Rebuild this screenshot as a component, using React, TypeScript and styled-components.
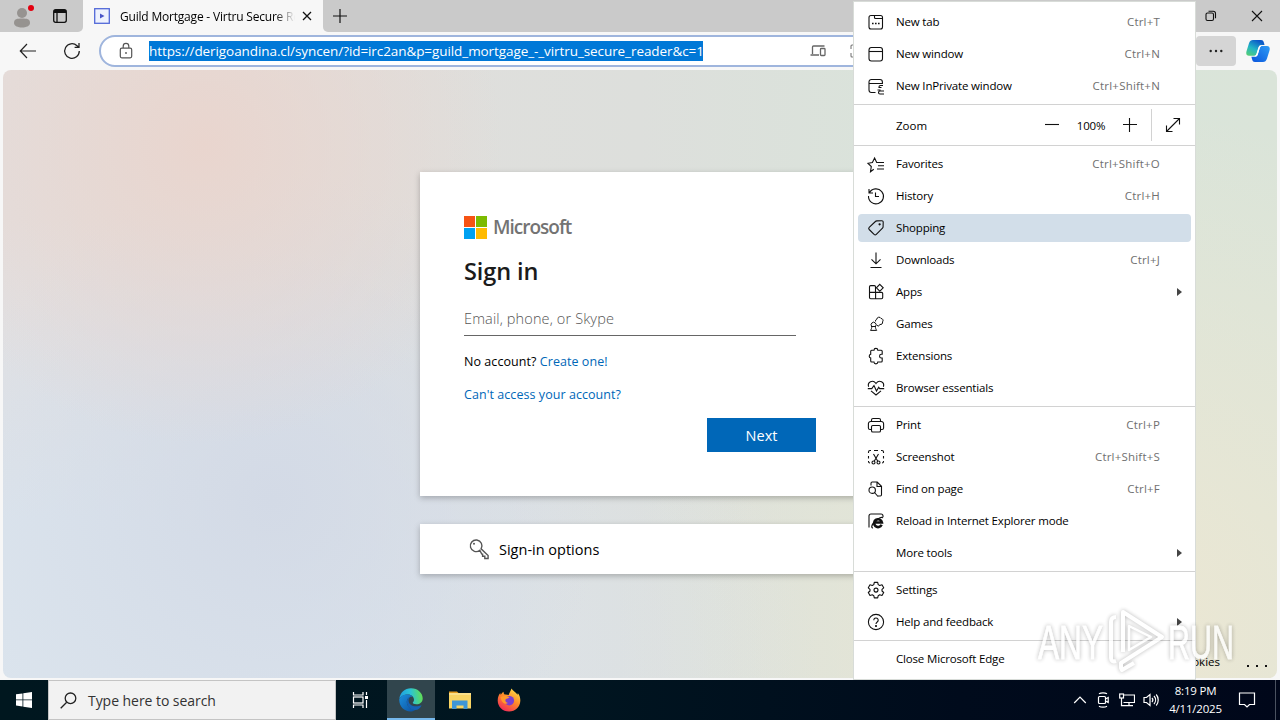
import { Fragment, ReactNode } from "react";
import styled, { createGlobalStyle } from "styled-components";

type IconName =
  | "newTab"
  | "window"
  | "inPrivate"
  | "star"
  | "history"
  | "tag"
  | "download"
  | "apps"
  | "games"
  | "puzzle"
  | "heart"
  | "print"
  | "screenshot"
  | "find"
  | "ie"
  | "settings"
  | "help";

interface MenuEntry {
  icon?: IconName;
  label: string;
  shortcut?: string;
  hasSubmenu?: boolean;
  active?: boolean;
}

const icons: Record<IconName, ReactNode> = {
  newTab: (
    <>
      <rect x="3" y="3.5" width="13.5" height="13.5" rx="2" />
      <path d="M8.500 3.500v2a1 1 0 0 0 1 1h7" />
      <path d="M6 11.500h1.600M9 11.500h1.600M12 11.500h1.600" strokeWidth="1.600" />
    </>
  ),
  window: (
    <>
      <rect x="3" y="3.5" width="13.5" height="13.5" rx="2.4" />
      <path d="M3 7.500h13.500" />
    </>
  ),
  inPrivate: (
    <>
      <path d="M9.500 16.500H5.400A2.400 2.400 0 0 1 3 14.100V5.900A2.400 2.400 0 0 1 5.400 3.500H14a2.400 2.400 0 0 1 2.400 2.400V8M3 7.500h13.400" />
      <path d="M17 9.500h-2.500a1.500 1.500 0 0 0-1.500 1.500v.5h2.500M11.500 14h3M18 15h-4a1.500 1.500 0 0 0 0 3h4" />
    </>
  ),
  star: (
    <path d="M7.800 15.300l-3.300 2.400.8-5.200-3.300-3.200 4.400-.7L8.600 4l2.100 4.500H18M12 11.800h6M11 15h7" />
  ),
  history: <path d="M3.400 6.800A7.500 7.500 0 1 1 2.500 10M3 3v4h4M9.500 6.500v4H13" />,
  tag: (
    <>
      <path d="M10.800 2.900l5-.1a1.300 1.300 0 0 1 1.400 1.400l-.1 4.600a2 2 0 0 1-.6 1.400l-6.200 6.200a1.600 1.600 0 0 1-2.200 0L3.200 11.500a1.600 1.600 0 0 1 0-2.200l6.200-5.800a2 2 0 0 1 1.400-.6z" />
      <circle cx="13.600" cy="6.300" r=".6" fill="currentColor" />
    </>
  ),
  download: <path d="M10 2.500v11M5.500 9.300l4.500 4.500 4.500-4.500M4.500 17.500h11" />,
  apps: (
    <>
      <path d="M9.500 10.300V4.800a1.200 1.200 0 0 0-1.200-1.200H4.700a1.200 1.200 0 0 0-1.200 1.200v10.800a1.200 1.200 0 0 0 1.200 1.200h10.800a1.200 1.200 0 0 0 1.200-1.200v-4a1.200 1.200 0 0 0-1.200-1.200H3.500M9.600 10.500v6.300" />
      <path d="M13.800 2.400l3.400 3.400-3.400 3.400-3.400-3.400z" />
    </>
  ),
  games: (
    <g strokeWidth="1">
      <path d="M5.800 12.500a2.500 2.500 0 1 1 3.600 0c0 1.500.3 2.300 1.300 3.900H4.500c1-1.600 1.300-2.400 1.300-3.900zM5 12.500h5" />
      <path d="M9.500 7.500a2 2 0 0 1 1.300-2.300 2.200 2.200 0 0 1 4.200-.7 2 2 0 0 1 1.500 3.400 2 2 0 0 1-2.600 2.500l-1.400 1.800-1.700-1" />
    </g>
  ),
  puzzle: (
    <path d="M8 4.300a1.900 1.900 0 0 1 3.800 0h3.400a1 1 0 0 1 1 1v3h-.8a1.850 1.850 0 0 0 0 3.700h.8v3a1 1 0 0 1-1 1h-3.400a1.900 1.900 0 0 1-3.800 0H5.700a1 1 0 0 1-1-1V12a1.900 1.900 0 0 1 0-3.700v-3a1 1 0 0 1 1-1z" />
  ),
  heart: (
    <>
      <path d="M2.600 8.700a4 4 0 0 1 7-3.700l.4.500.4-.5a4 4 0 0 1 7 3.700M5 12.800l5 4.200 5-4.200" />
      <path d="M1.800 10.600h4L8 7.500l2.500 5.500 2.200-3.700 1 1.300h4.500" />
    </>
  ),
  print: (
    <>
      <path d="M5.500 14.500H4a1.600 1.600 0 0 1-1.600-1.600V8.800A2.300 2.300 0 0 1 4.700 6.500h10.600a2.300 2.300 0 0 1 2.300 2.300v4.100a1.600 1.600 0 0 1-1.600 1.600h-1.500" />
      <path d="M5.500 6.500V5a1.500 1.500 0 0 1 1.500-1.500h6A1.500 1.500 0 0 1 14.500 5v1.500" />
      <rect x="5.500" y="10.500" width="9" height="6.500" rx="1.300" />
    </>
  ),
  screenshot: (
    <>
      <path d="M2.500 6V5a1.500 1.500 0 0 1 1.500-1.500h1M8 3.500h4M15 3.500h1A1.500 1.500 0 0 1 17.500 5v1M17.500 9v2.500M2.500 9v2.500M2.500 14v.5A1.500 1.500 0 0 0 4 16M17.500 14v.5A1.500 1.500 0 0 1 16 16" />
      <path d="M7.500 7l4.300 7.300M12.500 7l-4.300 7.300" />
      <circle cx="7.500" cy="15.500" r="1.500" />
      <circle cx="12.500" cy="15.500" r="1.500" />
    </>
  ),
  find: (
    <>
      <path d="M5 6.500V4.200A1.200 1.200 0 0 1 6.200 3h5L15.500 7.300v8.500A1.200 1.200 0 0 1 14.300 17h-2.500M11 3v4.500h4.500" />
      <circle cx="6.200" cy="11.200" r="3.200" />
      <path d="M8.500 13.500l3.500 4" />
    </>
  ),
  ie: (
    <>
      <path d="M3 16.500V5a2 2 0 0 1 2-2h10a2 2 0 0 1 2 2v1" />
      <path d="M15.600 13.800a3.900 3.900 0 1 1 .3-2.300H9" strokeWidth="2.600" />
      <path d="M7 16.800c-2 .4-1.700-3 1.800-6.500s7.800-5 8-3.200" strokeWidth="1.200" />
    </>
  ),
  settings: (
    <>
      <path d="M8.300 2.400h3.400l.5 2.200 1.500.9 2.300-.7 1.700 3-1.700 1.500v1.700l1.700 1.500-1.700 3-2.300-.7-1.500.9-.5 2.200H8.300l-.5-2.200-1.500-.9-2.300.7-1.700-3L4 11V9.300L2.300 7.800 4 4.800l2.300.7 1.500-.9z" strokeLinejoin="round" />
      <circle cx="10" cy="10.100" r="2" />
    </>
  ),
  help: (
    <>
      <circle cx="10" cy="10" r="7.600" />
      <path d="M7.800 8.200a2.200 2.200 0 1 1 3.400 1.800c-.8.600-1.200 1-1.200 2" />
      <circle cx="10" cy="14" r=".5" fill="currentColor" />
    </>
  ),
};

const windowEntries: MenuEntry[] = [
  { icon: "newTab", label: "New tab", shortcut: "Ctrl+T" },
  { icon: "window", label: "New window", shortcut: "Ctrl+N" },
  { icon: "inPrivate", label: "New InPrivate window", shortcut: "Ctrl+Shift+N" },
];

const sections: MenuEntry[][] = [
  [
    { icon: "star", label: "Favorites", shortcut: "Ctrl+Shift+O" },
    { icon: "history", label: "History", shortcut: "Ctrl+H" },
    { icon: "tag", label: "Shopping", active: true },
    { icon: "download", label: "Downloads", shortcut: "Ctrl+J" },
    { icon: "apps", label: "Apps", hasSubmenu: true },
    { icon: "games", label: "Games" },
    { icon: "puzzle", label: "Extensions" },
    { icon: "heart", label: "Browser essentials" },
  ],
  [
    { icon: "print", label: "Print", shortcut: "Ctrl+P" },
    { icon: "screenshot", label: "Screenshot", shortcut: "Ctrl+Shift+S" },
    { icon: "find", label: "Find on page", shortcut: "Ctrl+F" },
    { icon: "ie", label: "Reload in Internet Explorer mode" },
    { label: "More tools", hasSubmenu: true },
  ],
  [
    { icon: "settings", label: "Settings" },
    { icon: "help", label: "Help and feedback", hasSubmenu: true },
  ],
  [{ label: "Close Microsoft Edge" }],
];

const MenuRow = ({ entry }: { entry: MenuEntry }) => (
  <Row $active={entry.active}>
    <IconSlot>
      {entry.icon && <Glyph viewBox="0 0 20 20">{icons[entry.icon]}</Glyph>}
    </IconSlot>
    <RowLabel>{entry.label}</RowLabel>
    {entry.shortcut && <Shortcut>{entry.shortcut}</Shortcut>}
    {entry.hasSubmenu && <SubmenuArrow />}
  </Row>
);

const BrowserMenu = () => (
  <Menu>
    {windowEntries.map((entry) => (
      <MenuRow key={entry.label} entry={entry} />
    ))}
    <Divider />
    <ZoomRow>
      <ZoomLabel>Zoom</ZoomLabel>
      <ZoomButton>
        <Glyph viewBox="0 0 20 20">
          <path d="M3 9.500h14" />
        </Glyph>
      </ZoomButton>
      <ZoomValue>100%</ZoomValue>
      <ZoomButton>
        <Glyph viewBox="0 0 20 20">
          <path d="M3 9.500h14M9.500 3v14" />
        </Glyph>
      </ZoomButton>
      <FullScreenButton>
        <Glyph viewBox="0 0 20 20">
          <path d="M3.500 16.500l13-13M10.500 3.500h6v6M3.500 10.500v6h6" />
        </Glyph>
      </FullScreenButton>
    </ZoomRow>
    {sections.map((section, i) => (
      <Fragment key={i}>
        <Divider />
        {section.map((entry) => (
          <MenuRow key={entry.label} entry={entry} />
        ))}
      </Fragment>
    ))}
  </Menu>
);

const TabStrip = () => (
  <TitleBar>
    <TitleLeft>
      <Avatar width="24" height="28" viewBox="0 0 24 28">
        <circle cx="12" cy="12" r="5" fill="#969390" />
        <path d="M4 22c0-4 3-4.500 8-4.500s8 .5 8 4.500c0 3-4 4.500-8 4.500s-8-1.500-8-4.500z" fill="#969390" />
        <circle cx="21" cy="7" r="3" fill="#e3000f" />
      </Avatar>
      <svg width="16" height="16" viewBox="0 0 16 16" fill="none" stroke="#111" strokeWidth="1.300">
        <rect x="1.700" y="1.700" width="12.600" height="12.600" rx="2" />
        <path d="M2 3.500h12" strokeWidth="3" />
        <path d="M5 4v10" />
      </svg>
    </TitleLeft>
    <Tab>
      <svg width="16" height="16" viewBox="0 0 16 16">
        <rect x=".7" y=".7" width="14.600" height="14.600" fill="#eef2fd" stroke="#5168d8" strokeWidth="1.300" />
        <path d="M6 5.500l4.500 2.500L6 10.500z" fill="#4a56c8" />
      </svg>
      <TabTitle>Guild Mortgage - Virtru Secure Reader</TabTitle>
      <svg width="10" height="10" viewBox="0 0 10 10" stroke="#111" strokeWidth="1.300">
        <path d="M1 1l8 8M9 1l-8 8" />
      </svg>
    </Tab>
    <NewTabButton>
      <svg width="14" height="14" viewBox="0 0 14 14" stroke="#111" strokeWidth="1.200">
        <path d="M7 0v14M0 7h14" />
      </svg>
    </NewTabButton>
    <WindowButtons>
      <svg width="12" height="12" viewBox="0 0 12 12" fill="none" stroke="#111" strokeWidth="1.100">
        <rect x="1" y="3" width="7.500" height="7.500" rx="1.500" />
        <path d="M3.500 1.300h4.700a2.300 2.300 0 0 1 2.300 2.300v4.700" />
      </svg>
      <svg width="12" height="12" viewBox="0 0 12 12" stroke="#111" strokeWidth="1.100">
        <path d="M1 1l10 10M11 1L1 11" />
      </svg>
    </WindowButtons>
  </TitleBar>
);

const AddressBar = () => (
  <Toolbar>
    <NavButtons>
      <svg width="18" height="16" viewBox="0 0 18 16" fill="none" stroke="#222" strokeWidth="1.200">
        <path d="M17 8H1.500M8 1L1.300 8 8 15" />
      </svg>
      <svg width="18" height="18" viewBox="0 0 18 18" fill="none" stroke="#222" strokeWidth="1.300">
        <path d="M16.300 9A7.300 7.300 0 1 1 14 3.700l1.500 1.400M16 1v4.400h-4.400" />
      </svg>
    </NavButtons>
    <UrlField>
      <svg width="14" height="18" viewBox="0 0 14 18" fill="none" stroke="#555" strokeWidth="1.200">
        <rect x="1.300" y="6.200" width="11.400" height="9.600" rx="1.500" />
        <path d="M4.200 6V4.200a2.800 2.800 0 0 1 5.600 0V6" />
        <circle cx="7" cy="11" r=".9" fill="#555" stroke="none" />
      </svg>
      <Url>
        https://derigoandina.cl/syncen/?id=irc2an&amp;p=guild_mortgage_-_virtru_secure_reader&amp;c=1
      </Url>
      <FieldActions>
        <svg width="16" height="14" viewBox="0 0 16 14" fill="none" stroke="#666" strokeWidth="1.300">
          <path d="M2.500 10V3a1 1 0 0 1 1-1h11M.5 11h8.500" />
          <rect x="10.500" y="4.500" width="4.500" height="7" rx=".8" />
        </svg>
        <svg width="14" height="14" viewBox="0 0 14 14" fill="none" stroke="#777" strokeWidth="1.100">
          <path d="M1 5V2a1 1 0 0 1 1-1h2M1 9v3a1 1 0 0 0 1 1h2M9 1h4v12H9" />
        </svg>
      </FieldActions>
    </UrlField>
    <MoreButton>
      <svg width="14" height="4" viewBox="0 0 14 4" fill="#222">
        <circle cx="1.700" cy="2" r="1.200" />
        <circle cx="7" cy="2" r="1.200" />
        <circle cx="12.300" cy="2" r="1.200" />
      </svg>
    </MoreButton>
    <CopilotButton>
      <svg width="24" height="24" viewBox="0 0 24 24">
        <defs>
          <linearGradient id="copilotLeft" x1="0" y1="1" x2=".6" y2="0">
            <stop offset="0" stopColor="#5ad06c" />
            <stop offset=".5" stopColor="#22b5c6" />
            <stop offset="1" stopColor="#0b58c8" />
          </linearGradient>
          <linearGradient id="copilotRight" x1="1" y1="0" x2="0" y2="1">
            <stop offset="0" stopColor="#2d9cf5" />
            <stop offset="1" stopColor="#0a54dc" />
          </linearGradient>
        </defs>
        <path d="M7 1h8c2 0 2.500 1 3 3l.5 2h-3c-2 0-2.500 1-3 3l-1.500 5c-.7 2.200-1.500 2.700-3 2.700H3c-2.500 0-3.200-2-2.500-4.500l2.500-8C3.800 2 5 1 7 1z" fill="url(#copilotLeft)" />
        <path d="M17 23H9c-2 0-2.500-1-3-3l-.6-2.300H9c2 0 2.500-1 3-3l1.500-5c.7-2.200 1.500-2.700 3-2.700H21c2.500 0 3.200 2 2.500 4.500l-2.500 8C20.200 22 19 23 17 23z" fill="url(#copilotRight)" />
        <path d="M13.800 6.800h1.700c-1.200.7-1.700 2-2.200 3.700l-1.200 4c-.5 1.700-1.200 2.800-2.500 3H8.500c1.200-.7 1.700-2 2.200-3.500l1.200-4c.5-1.500 1-2.700 1.900-3.200z" fill="#fff" />
      </svg>
    </CopilotButton>
  </Toolbar>
);

const SignInPage = () => (
  <Page>
    <Card>
      <Brand>
        <BrandTiles>
          <Tile $color="#f65314" />
          <Tile $color="#7cbb00" />
          <Tile $color="#00a1f1" />
          <Tile $color="#ffbb00" />
        </BrandTiles>
        <BrandName>Microsoft</BrandName>
      </Brand>
      <Heading>Sign in</Heading>
      <EmailField>Email, phone, or Skype</EmailField>
      <HelpLine>
        No account? <Link>Create one!</Link>
      </HelpLine>
      <HelpLine>
        <Link>Can't access your account?</Link>
      </HelpLine>
      <NextButton>Next</NextButton>
    </Card>
    <OptionsCard>
      <svg width="22" height="22" viewBox="0 0 22 22" fill="none" stroke="#555" strokeWidth="1.400">
        <path d="M11.800 12.300a5.800 5.800 0 1 1 1.300-1.500l7 6.800v2.900h-3.300v-2.200h-2.200v-2.200h-.8z" />
        <circle cx="6" cy="5.800" r="1" fill="#555" stroke="none" />
      </svg>
      Sign-in options
    </OptionsCard>
    <Footer>
      <span>Privacy &amp; cookies</span>
      <FooterDots>
        <Dot />
        <Dot />
        <Dot />
      </FooterDots>
    </Footer>
  </Page>
);

const TaskBar = () => (
  <Bar>
    <StartButton>
      <svg width="16" height="16" viewBox="0 0 16 16" fill="#fff">
        <path d="M0 2.300L6.500 1.400v6.100H0zM7.300 1.300L16 0v7.500H7.300zM0 8.300h6.500v6.200L0 13.600zM7.300 8.300H16V16l-8.700-1.300z" />
      </svg>
    </StartButton>
    <SearchBox>
      <svg width="17" height="17" viewBox="0 0 17 17" fill="none" stroke="#222" strokeWidth="1.300">
        <circle cx="10.500" cy="6.300" r="5.300" />
        <path d="M6.700 10.200L.7 16.200" />
      </svg>
      <span>Type here to search</span>
    </SearchBox>
    <AppButton>
      <svg width="18" height="16" viewBox="0 0 18 16" fill="none" stroke="#fff" strokeWidth="1.200">
        <path d="M1.500 0v3h9.500V0M1.500 16v-3h9.500v3M14.500 0v3M14.500 8v8" />
        <rect x="1.500" y="5" width="9.500" height="6" />
        <path d="M14.500 4v3" strokeWidth="3" />
      </svg>
    </AppButton>
    <AppButton $active>
      <svg width="24" height="24" viewBox="0 0 24 24">
        <defs>
          <linearGradient id="edgeTop" x1="0" y1=".5" x2="1" y2=".4">
            <stop offset="0" stopColor="#1e9de0" />
            <stop offset=".5" stopColor="#2cc3d5" />
            <stop offset="1" stopColor="#63e04f" />
          </linearGradient>
          <linearGradient id="edgeBody" x1="0" y1="0" x2="1" y2="1">
            <stop offset="0" stopColor="#1b8fdc" />
            <stop offset="1" stopColor="#0c50a0" />
          </linearGradient>
        </defs>
        <path d="M.3 11C1 4.800 5.700.3 12 .3c7 0 11.700 5 11.700 10 0 4-3 6-6.200 6-2.500 0-3.700-.8-3.700-1.500 0-.6 1.200-1.200 1.200-3C15 9 12.600 6.500 9 6.500 5 6.500 1.500 8.500.3 11z" fill="url(#edgeTop)" />
        <path d="M.3 11c1.200-3 4.700-4.800 8.500-4.500 2.400.2 4 1 5 2.300-3.300-.8-6 1.700-6 5.200 0 4.500 4 8 8.700 7.700-1.400 1-3 1.800-5 1.800C5 23.500-.3 18 .3 11z" fill="url(#edgeBody)" />
        <path d="M7.800 14c0-2.500 1.400-4.600 3.400-5.300-1 1-1.600 2.200-1.600 3.700 0 4 4.500 6.700 9 5.800 1.600-.3 3-.9 4-.8-1.300 2.500-3.700 4.500-6.100 4.600C11.800 22.500 7.800 18.500 7.800 14z" fill="#1462b4" />
      </svg>
    </AppButton>
    <AppButton>
      <svg width="22" height="20" viewBox="0 0 22 20">
        <path d="M0 1.500h8l2 2H0z" fill="#e39a1c" />
        <path d="M0 3h22v15.500H0z" fill="#f9d463" />
        <path d="M0 3h22v2H0z" fill="#fbe08a" />
        <path d="M3 10.500h15.500V19h-4v-3.500H7.500V19H3z" fill="#3f96d6" />
      </svg>
    </AppButton>
    <AppButton>
      <svg width="24" height="24" viewBox="0 0 24 24">
        <defs>
          <linearGradient id="foxBody" x1=".8" y1="0" x2=".2" y2="1">
            <stop offset="0" stopColor="#ffe14a" />
            <stop offset=".45" stopColor="#ff8c28" />
            <stop offset="1" stopColor="#f0235c" />
          </linearGradient>
        </defs>
        <path d="M14.500.5c1 2 4.500 4 6 6.200.3-.7.300-1.200.2-1.700C22.600 7 23.500 10 23.300 13c-.3 6-5 10.500-11.200 10.500C5.500 23.500.7 18.700.7 12.500c0-3.400 1.300-6 2.600-7.500 0 .8.200 1.400.5 1.800.6-1 1.800-2.500 2.800-3-.2 1 .2 2 1 2.700 1.500-.2 3 0 4 .6C12 5.500 13.500 3.500 14.500.5z" fill="url(#foxBody)" />
        <circle cx="12.300" cy="12.700" r="4.800" fill="#7a3fd0" />
        <path d="M3.500 9c3-1.500 6-1.500 9 .3-1 1.200-3 1.200-4 2.200-.5 1.700.5 3.200 2.500 3.500-2.500 2-6.500.2-7.500-6z" fill="#ff9a2a" />
      </svg>
    </AppButton>
    <Tray>
      <svg width="14" height="8" viewBox="0 0 14 8" fill="none" stroke="#fff" strokeWidth="1.200">
        <path d="M1.200 7L7 1.200 12.800 7" />
      </svg>
      <svg width="16" height="16" viewBox="0 0 16 16" fill="none" stroke="#fff" strokeWidth="1.200">
        <rect x="3.500" y="4.500" width="7" height="7" rx="1" />
        <path d="M10.500 7l2.700-1.500v5L10.500 9M4 1.800c2-1.300 6-1.300 8 0M4 14.200c2 1.300 6 1.300 8 0" />
      </svg>
      <svg width="16" height="16" viewBox="0 0 16 16" fill="none" stroke="#fff" strokeWidth="1.200">
        <path d="M5 3h10.500v7.500H4.500M10 10.500v3M6 13.600h8M2.500 6v7.600H6" />
        <rect x=".7" y="2" width="3.800" height="4" />
      </svg>
      <svg width="17" height="16" viewBox="0 0 17 16" fill="none" stroke="#fff" strokeWidth="1.200">
        <path d="M1 5.500h2.500L7 2.500v11l-3.500-3H1zM9 6a3 3 0 0 1 0 4M11 4a6 6 0 0 1 0 8M13.200 2.500a8.500 8.500 0 0 1 0 11" />
      </svg>
    </Tray>
    <Clock>
      <span>8:19 PM</span>
      <span>4/11/2025</span>
    </Clock>
    <Notifications>
      <svg width="18" height="18" viewBox="0 0 18 18" fill="none" stroke="#fff" strokeWidth="1.200">
        <path d="M1.500 2h15v11.500H11.500L9 16l-2.500-2.500h-5z" />
      </svg>
    </Notifications>
  </Bar>
);

const App = () => {
  return (
    <Desktop>
      <GlobalStyle />
      <TabStrip />
      <AddressBar />
      <SignInPage />
      <TaskBar />
      <BrowserMenu />
      <Watermark viewBox="0 0 200 72">
        <g
          fill="#fff"
          stroke="#fff"
          strokeWidth=".8"
          fontFamily="'Liberation Sans Narrow', 'Liberation Sans', sans-serif"
          fontSize="49"
        >
          <text x="3" y="55" textLength="65" lengthAdjust="spacingAndGlyphs">
            ANY
          </text>
          <text x="133" y="55" textLength="66" lengthAdjust="spacingAndGlyphs">
            RUN
          </text>
        </g>
        <g fill="none" stroke="#fff" strokeWidth="4" strokeLinejoin="round">
          <path d="M81 13c-4 0-5 2-5 5v36c0 3 2 4 5 3" />
          <path d="M88 48V8l39 25-41 26v5l1 2 12-7" />
          <path d="M94 22v24l22-13z" strokeWidth="2.500" />
        </g>
      </Watermark>
    </Desktop>
  );
};

export default App;

const GlobalStyle = createGlobalStyle`
  body {
    margin: 0;
    overflow: hidden;
    font-family: "Open Sans", "Noto Sans", sans-serif;
  }

  *, *::before, *::after {
    box-sizing: border-box;
  }

  svg {
    display: block;
    flex-shrink: 0;
  }
`;

const Desktop = styled.div`
  position: relative;
  width: 1280px;
  height: 720px;
  display: flex;
  flex-direction: column;
  overflow: hidden;
  background: #f7f7f7;
  color: #000;
`;

const TitleBar = styled.div`
  display: flex;
  height: 32px;
  background: #f7f7f7;
`;

const TitleLeft = styled.div`
  display: flex;
  align-items: center;
  gap: 18px;
  width: 83px;
  padding-left: 10px;
  background: #cacaca;
  border-bottom-right-radius: 5px;
`;

const Avatar = styled.svg`
  margin-top: -2px;
`;

const Tab = styled.div`
  display: flex;
  align-items: center;
  width: 240px;
  padding: 0 11px;
`;

const TabTitle = styled.span`
  width: 175px;
  margin: 0 7px 0 10px;
  overflow: hidden;
  white-space: nowrap;
  font-size: 12px;
  letter-spacing: -0.2px;
  mask-image: linear-gradient(to right, #000 155px, transparent 175px);
`;

const NewTabButton = styled.div`
  flex: 1;
  display: flex;
  align-items: center;
  padding-left: 10px;
  background: #cacaca;
  border-bottom-left-radius: 5px;
`;

const WindowButtons = styled.div`
  display: flex;
  align-items: center;
  gap: 34px;
  padding-right: 17px;
  background: #cacaca;
`;

const Toolbar = styled.div`
  display: flex;
  align-items: center;
  height: 38px;
`;

const NavButtons = styled.div`
  display: flex;
  align-items: center;
  gap: 26px;
  width: 99px;
  padding-left: 19px;
`;

const UrlField = styled.div`
  flex: 1;
  display: flex;
  align-items: center;
  height: 32px;
  padding-left: 18px;
  background: #fff;
  border: 2px solid #9fb5dd;
  border-radius: 16px;
`;

const Url = styled.span`
  width: 554px;
  height: 20px;
  margin-left: 16px;
  line-height: 20px;
  white-space: nowrap;
  background: #0078d7;
  color: #fff;
  font-size: 13.500px;
  letter-spacing: -0.08px;
`;

const FieldActions = styled.div`
  display: flex;
  align-items: center;
  gap: 24px;
  margin-left: 107px;
`;

const MoreButton = styled.div`
  display: flex;
  align-items: center;
  justify-content: center;
  width: 40px;
  height: 30px;
  background: #d5d5d5;
  border-radius: 4px;
`;

const CopilotButton = styled.div`
  width: 44px;
  padding-left: 10px;
`;

const Page = styled.main`
  display: flex;
  flex-direction: column;
  align-items: center;
  width: 1274px;
  height: 608px;
  margin: 0 3px 2px;
  padding-top: 102px;
  border-radius: 8px;
  background:
    radial-gradient(circle at 200px 75px, #e9d5ce 0, rgba(233, 213, 206, 0) 300px),
    radial-gradient(circle at 270px 430px, #d3dae6 0, rgba(211, 218, 230, 0) 330px),
    radial-gradient(ellipse 760px 460px at 60px 608px, #dbe4ed 0, #dbe4ed 35%, rgba(219, 228, 237, 0) 100%),
    radial-gradient(circle at 1130px 560px, #ece7d3 0, rgba(236, 231, 211, 0) 520px),
    linear-gradient(90deg, #e3dedd 0, #dddfdc 50%, #d9e4da 75%, #dae4d9 100%);
`;

const Card = styled.section`
  display: flex;
  flex-direction: column;
  width: 440px;
  height: 324px;
  padding: 44px;
  background: #fff;
  box-shadow: 0 2px 6px rgba(0, 0, 0, 0.25);
`;

const Brand = styled.div`
  display: flex;
  align-items: center;
  height: 23px;
`;

const BrandTiles = styled.div`
  display: grid;
  grid-template-columns: 11px 11px;
  gap: 1px;
`;

const Tile = styled.div<{ $color: string }>`
  height: 11px;
  background: ${(props) => props.$color};
`;

const BrandName = styled.span`
  margin: -2px 0 0 6px;
  color: #737373;
  font-size: 19px;
  font-weight: 600;
  letter-spacing: -1px;
`;

const Heading = styled.h1`
  height: 32px;
  margin: 16px 0 14px;
  line-height: 32px;
  font-size: 23.500px;
  font-weight: 600;
  letter-spacing: -0.1px;
  color: #1b1b1b;
`;

const EmailField = styled.div`
  width: 332px;
  height: 35px;
  line-height: 36px;
  border-bottom: 1px solid #666;
  color: #555;
  font-size: 14.500px;
  font-weight: 300;
  letter-spacing: 0.13px;
`;

const HelpLine = styled.div`
  height: 20px;
  margin-top: 16px;
  line-height: 20px;
  font-size: 12.500px;
  letter-spacing: 0.06px;

  & + & {
    margin-top: 13px;
  }
`;

const Link = styled.span`
  color: #0067b8;
`;

const NextButton = styled.div`
  align-self: flex-end;
  flex-shrink: 0;
  width: 109px;
  height: 34px;
  margin-top: 13px;
  line-height: 35px;
  text-align: center;
  background: #0067b8;
  color: #fff;
  font-size: 14.500px;
`;

const OptionsCard = styled.section`
  display: flex;
  align-items: center;
  gap: 9px;
  width: 440px;
  height: 50px;
  margin-top: 28px;
  padding-left: 48px;
  background: #fff;
  box-shadow: 0 2px 6px rgba(0, 0, 0, 0.25);
  font-size: 14.500px;
`;

const Footer = styled.footer`
  display: flex;
  align-self: flex-end;
  align-items: center;
  gap: 27px;
  height: 34px;
  margin-top: auto;
  padding-right: 10px;
  font-size: 11.500px;
`;

const FooterDots = styled.div`
  display: flex;
  gap: 7px;
  padding-top: 10px;
`;

const Dot = styled.span`
  width: 2px;
  height: 2px;
  background: #111;
`;

const Menu = styled.div`
  position: absolute;
  top: 1px;
  left: 853px;
  width: 343px;
  height: 679px;
  display: flex;
  flex-direction: column;
  padding-top: 4px;
  background: #fff;
  border: 1px solid #d8dcd8;
  font-size: 11.500px;
`;

const Divider = styled.div`
  height: 1px;
  margin: 2px 0;
  background: #d2d2d2;
`;

const Row = styled.div<{ $active?: boolean }>`
  display: flex;
  align-items: center;
  height: 28px;
  margin: 2px 4px;
  padding-left: 8px;
  border-radius: 4px;
  background: ${(props) => (props.$active ? "#d2dee9" : "transparent")};
`;

const IconSlot = styled.span`
  width: 30px;
`;

const Glyph = styled.svg`
  width: 20px;
  height: 20px;
  fill: none;
  stroke: #111;
  stroke-width: 1.1;
`;

const RowLabel = styled.span`
  flex: 1;
  padding-bottom: 1px;
  letter-spacing: -0.17px;
`;

const Shortcut = styled.span`
  padding: 0 31px 1px 0;
  color: #707070;
  letter-spacing: 0.2px;
`;

const SubmenuArrow = styled.span`
  margin-right: 9px;
  border: 4px solid transparent;
  border-left: 5px solid #444;
  border-right: 0;
`;

const ZoomRow = styled.div`
  display: flex;
  align-items: center;
  height: 36px;
  padding-left: 42px;
`;

const ZoomLabel = styled.span`
  width: 146px;
`;

const ZoomButton = styled.span`
  width: 20px;
`;

const ZoomValue = styled.span`
  width: 58px;
  text-align: center;
  letter-spacing: -0.2px;
`;

const FullScreenButton = styled.span`
  height: 32px;
  margin-left: 11px;
  padding: 6px 0 0 11px;
  border-left: 1px solid #d2d2d2;
`;

const Bar = styled.div`
  display: flex;
  height: 40px;
  background: linear-gradient(90deg, #00171f 0, #001520 45%, #000b1c 75%, #00071a 100%);
  color: #fff;
`;

const StartButton = styled.div`
  display: flex;
  align-items: center;
  justify-content: center;
  width: 48px;
`;

const SearchBox = styled.div`
  display: flex;
  align-items: center;
  gap: 11px;
  width: 288px;
  padding-left: 11px;
  background: #f2f2f2;
  border: 1px solid #c4c4c4;
  color: #333;
  font-size: 14px;
  letter-spacing: -0.05px;
`;

const AppButton = styled.div<{ $active?: boolean }>`
  display: flex;
  align-items: center;
  justify-content: center;
  width: ${(props) => (props.$active ? "48px" : "49px")};
  margin-left: ${(props) => (props.$active ? "2px" : "0")};
  background: ${(props) => (props.$active ? "#31454d" : "transparent")};
  box-shadow: ${(props) => (props.$active ? "inset 0 -2px #76b9ed" : "none")};
`;

const Tray = styled.div`
  display: flex;
  align-items: center;
  gap: 8px;
  margin-left: auto;
  margin-right: 8px;
`;

const Clock = styled.div`
  display: flex;
  flex-direction: column;
  width: 55px;
  padding-top: 2px;
  line-height: 18px;
  text-align: center;
  white-space: nowrap;
  font-size: 11.500px;
  letter-spacing: -0.2px;
`;

const Notifications = styled.div`
  display: flex;
  align-items: center;
  width: 53px;
  margin-right: 4px;
  padding-left: 15px;
  border-right: 1px solid #4a5260;
`;

const Watermark = styled.svg`
  position: absolute;
  top: 604px;
  left: 1035px;
  width: 200px;
  height: 72px;
  opacity: 0.8;
  filter: drop-shadow(0 0 2px rgba(0, 0, 0, 0.35));
`;
